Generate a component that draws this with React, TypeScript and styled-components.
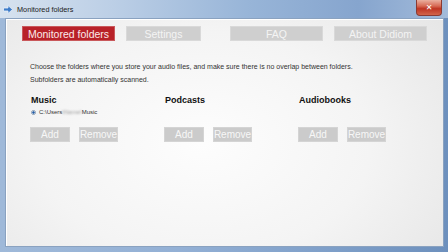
import React from 'react';
import styled, { createGlobalStyle } from 'styled-components';

const GlobalStyle = createGlobalStyle`
  html, body {
    margin: 0;
    padding: 0;
    width: 448px;
    height: 252px;
    overflow: hidden;
    background: #fff;
  }
`;

type Section = { title: string; folders: { prefix: string; hidden: string; suffix: string }[] };

const sections: Section[] = [
  { title: 'Music', folders: [{ prefix: 'C:\\Users', hidden: '\\Name\\', suffix: 'Music' }] },
  { title: 'Podcasts', folders: [] },
  { title: 'Audiobooks', folders: [] }
];

const tabs = [
  { label: 'Monitored folders', width: 93, active: true },
  { label: 'Settings', width: 75, active: false },
  { label: 'FAQ', width: 93, active: false },
  { label: 'About Didiom', width: 93, active: false }
];

const Window = styled.div`
  width: 448px;
  height: 252px;
  display: flex;
  flex-direction: column;
  box-sizing: border-box;
  background: linear-gradient(90deg, #9fb9d9 0%, #93b0d5 40%, #7d9ec8 75%, #6d90bd 100%);
`;

const TitleBar = styled.div`
  height: 18px;
  display: flex;
  align-items: center;
  padding: 0 6px 0 3px;
  background: linear-gradient(90deg, #d6e2ef 0%, #bccfe6 25%, #98b5d8 55%, #86a5ce 80%, #a3bbda 100%);
`;

const TitleText = styled.span`
  flex: 1;
  margin-left: 4px;
  font-family: 'Liberation Sans', Arial, sans-serif;
  font-size: 7.3px;
  color: #1a1a1a;
`;

const CloseButton = styled.div`
  width: 24px;
  height: 15px;
  margin-top: -2px;
  border: 1px solid #8a3a32;
  border-top: none;
  border-radius: 0 0 4px 4px;
  background: linear-gradient(180deg, #eab0a0 0%, #d76a55 40%, #bf3523 58%, #d2644a 100%);
  display: flex;
  align-items: center;
  justify-content: center;
  color: #fff;
  font-family: 'DejaVu Sans', sans-serif;
  font-size: 8px;
  font-weight: bold;
`;

const Frame = styled.div`
  flex: 1;
  display: flex;
  padding: 0 4px 5px 5px;
`;

const Content = styled.div`
  flex: 1;
  border: 1px solid #8aa2c0;
  box-shadow: inset 1px 1px 0 #fff;
  background: radial-gradient(ellipse 70% 90% at 45% 55%, #fdfdfd 0%, #f4f4f4 55%, #e6e6e6 100%);
  padding: 7px 0 0 24px;
  font-family: 'Liberation Sans', Arial, sans-serif;
`;

const TabRow = styled.div`
  display: grid;
  grid-template-columns: repeat(4, 104px);
  margin-left: -8px;
`;

const Tab = styled.div<{ $active: boolean; $width: number }>`
  width: ${(p) => p.$width}px;
  height: 15px;
  display: flex;
  align-items: center;
  justify-content: center;
  font-size: 10.5px;
  color: ${(p) => (p.$active ? '#fbeaea' : '#f4f4f4')};
  background: ${(p) => (p.$active ? '#b82128' : '#cfcfcf')};
  border: 1px solid ${(p) => (p.$active ? '#c9585b' : '#d9d9d9')};
  box-sizing: border-box;
`;

const Intro = styled.p`
  margin: 19px 0 0 0;
  font-size: 7px;
  line-height: 13px;
  color: #333;
`;

const Columns = styled.div`
  display: grid;
  grid-template-columns: repeat(3, 134px);
  margin-top: 9px;
`;

const Column = styled.div`
  display: flex;
  flex-direction: column;
`;

const Heading = styled.div`
  font-size: 9px;
  font-weight: bold;
  color: #111;
  margin-left: 1px;
  height: 12px;
`;

const FolderList = styled.div`
  height: 20px;
  padding-top: 2px;
  box-sizing: border-box;
`;

const Folder = styled.div`
  display: flex;
  align-items: center;
  gap: 3px;
  margin-left: 1px;
  font-size: 6px;
  color: #333;
`;

const Radio = styled.span`
  width: 5px;
  height: 5px;
  border-radius: 50%;
  border: 1px solid #8a9cb0;
  background: radial-gradient(circle, #2a5a9a 0%, #4c7fc0 50%, #dfe8f2 60%);
  box-sizing: border-box;
`;

const Hidden = styled.span`
  filter: blur(1.2px);
  color: #999;
`;

const ButtonRow = styled.div`
  display: flex;
  gap: 9px;
`;

const Button = styled.div<{ $width: number }>`
  width: ${(p) => p.$width}px;
  height: 15px;
  display: flex;
  align-items: center;
  justify-content: center;
  background: #cbcbcb;
  color: #f7f7f7;
  font-size: 10px;
  box-sizing: border-box;
  border: 1px solid #d4d4d4;
`;

const ArrowIcon = () => (
  <svg width="10" height="9" viewBox="0 0 10 9">
    <path d="M0.5 3 H5 V0.5 L9.5 4.5 L5 8.5 V6 H0.5 Z" fill="#3d7cc9" stroke="#e8f0fa" strokeWidth="0.8" />
  </svg>
);

const App = () => (
  <>
    <GlobalStyle />
    <Window>
      <TitleBar>
        <ArrowIcon />
        <TitleText>Monitored folders</TitleText>
        <CloseButton>✕</CloseButton>
      </TitleBar>
      <Frame>
        <Content>
          <TabRow>
            {tabs.map((t) => (
              <Tab key={t.label} $active={t.active} $width={t.width}>{t.label}</Tab>
            ))}
          </TabRow>
          <Intro>
            Choose the folders where you store your audio files, and make sure there is no overlap between folders.
            <br />
            Subfolders are automatically scanned.
          </Intro>
          <Columns>
            {sections.map((s) => (
              <Column key={s.title}>
                <Heading>{s.title}</Heading>
                <FolderList>
                  {s.folders.map((f) => (
                    <Folder key={f.suffix}>
                      <Radio />
                      <span>{f.prefix}<Hidden>{f.hidden}</Hidden>{f.suffix}</span>
                    </Folder>
                  ))}
                </FolderList>
                <ButtonRow>
                  <Button $width={40}>Add</Button>
                  <Button $width={39}>Remove</Button>
                </ButtonRow>
              </Column>
            ))}
          </Columns>
        </Content>
      </Frame>
    </Window>
  </>
);

export default App;
